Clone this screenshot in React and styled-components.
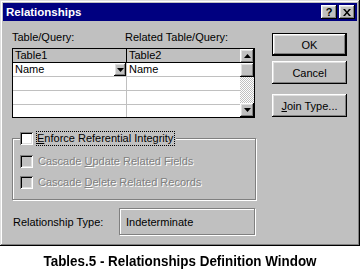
import React from "react"
import styled, { createGlobalStyle } from "styled-components"

const GlobalStyle = createGlobalStyle`
  html, body { margin:0; padding:0; background:#fff; }
  body { font-family:"Liberation Sans", Arial, sans-serif; font-size:11px; color:#000; }
  * { box-sizing:border-box; }
`

const raised = `
  background:#c0c0c0;
  box-shadow: inset -1px -1px #000, inset 1px 1px #fff, inset -2px -2px #808080, inset 2px 2px #dfdfdf;
`

const Page = styled.div`
width:360px;
`

const Window = styled.div`
width:360px;
height:246px;
padding:3px;
background:#c0c0c0;
box-shadow: inset -1px -1px #000, inset 1px 1px #dfdfdf, inset -2px -2px #808080, inset 2px 2px #fff;
display:flex;
flex-direction:column;
`

const TitleBar = styled.div`
height:18px;
background:#000080;
display:flex;
align-items:center;
padding:0 2px 0 3px;
`

const TitleText = styled.div`
flex:1;
color:#fff;
font-weight:bold;
font-size:11.5px;
`

const CaptionButton = styled.div`
${raised}
width:16px;
height:14px;
margin-left:2px;
display:flex;
align-items:center;
justify-content:center;
font-weight:bold;
font-size:11px;
line-height:14px;
`

const Body = styled.div`
flex:1;
display:flex;
padding-left:9px;
`

const LeftCol = styled.div`
width:245px;
padding-top:10px;
display:flex;
flex-direction:column;
`

const RightCol = styled.div`
width:75px;
margin-left:15px;
padding-top:12px;
display:flex;
flex-direction:column;
`

const Labels = styled.div`
display:grid;
grid-template-columns:113px 1fr;
line-height:13px;
height:13px;
margin-bottom:4px;
`

const Grid = styled.div`
width:243px;
height:70px;
border:1px solid #000;
display:flex;
background:#fff;
`

const Rows = styled.div`
width:227px;
display:flex;
flex-direction:column;
`

const Row = styled.div`
display:flex;
height:${p => (p.$last ? 12 : 14)}px;
border-bottom:${p => (p.$last ? "none" : p.$header ? "1px solid #000" : "1px solid #c0c0c0")};
background:${p => (p.$header ? "#c0c0c0" : "#fff")};
`

const Cell = styled.div`
width:${p => (p.$first ? 114 : 113)}px;
border-right:${p => (p.$first ? (p.$header ? "1px solid #000" : "1px solid #c0c0c0") : "none")};
display:flex;
line-height:13px;
`

const CellText = styled.span`
flex:1;
padding-left:2px;
`

const DropButton = styled.div`
${raised}
width:12px;
height:13px;
display:flex;
align-items:center;
justify-content:center;
`

const ScrollBar = styled.div`
width:14px;
display:flex;
flex-direction:column;
`

const ScrollBtn = styled.div`
${raised}
height:14px;
display:flex;
align-items:center;
justify-content:center;
`

const Track = styled.div`
flex:1;
background-image:conic-gradient(#c0c0c0 25%, #fff 0 50%, #c0c0c0 0 75%, #fff 0);
background-size:2px 2px;
`

const Group = styled.fieldset`
margin:13px 0 0 0;
width:244px;
padding:0 7px 10px 7px;
border:1px solid #808080;
box-shadow: inset 1px 1px #fff, 1px 1px #fff;
min-width:0;
`

const Legend = styled.legend`
padding:0 1px 0 0;
margin-left:0;
background:#c0c0c0;
display:flex;
align-items:center;
height:15px;
`

const CheckBox = styled.span`
display:inline-block;
width:13px;
height:13px;
flex:none;
background:${p => (p.$disabled ? "#c0c0c0" : "#fff")};
box-shadow: inset 1px 1px #808080, inset -1px -1px #fff, inset 2px 2px #000, inset -2px -2px #dfdfdf;
`

const FocusLabel = styled.span`
margin-left:3px;
border:1px dotted #000;
padding:0 1px 0 0;
line-height:13px;
`

const OptionRow = styled.div`
display:flex;
align-items:center;
height:13px;
margin-top:${p => p.$gap}px;
`

const DisabledLabel = styled.span`
margin-left:5px;
color:#808080;
text-shadow:1px 1px 0 #fff;
line-height:13px;
`

const TypeRow = styled.div`
display:flex;
align-items:center;
margin-top:8px;
`

const TypeLabel = styled.div`
width:107px;
padding-left:1px;
`

const TypeBox = styled.div`
width:136px;
height:27px;
border:1px solid #808080;
box-shadow: inset 1px 1px #fff, 1px 1px #fff;
padding-left:6px;
display:flex;
align-items:center;
`

const Button = styled.div`
${raised}
width:75px;
height:23px;
display:flex;
align-items:center;
justify-content:center;
margin-top:${p => p.$gap || 0}px;
${p => p.$default && `
  border:1px solid #000;
`}
`

const Caption = styled.div`
text-align:center;
padding-top:6px;
font-weight:bold;
font-size:15.5px;
line-height:17px;
transform:scaleX(0.865);
`

const Arrow = ({ up }) => (
  <svg width="7" height="4" viewBox="0 0 7 4">
    <polygon points={up ? "3.5,0 7,4 0,4" : "0,0 7,0 3.5,4"} fill="#000" />
  </svg>
)

const CloseGlyph = () => (
  <svg width="8" height="7" viewBox="0 0 8 7">
    <path d="M0 0h2l2 2.5L6 0h2L5 3.5 8 7H6L4 4.5 2 7H0l3-3.5z" fill="#000" />
  </svg>
)

const U = styled.span`
text-decoration:underline;
`

export default function App() {
  return (
    <Page>
      <GlobalStyle />
      <Window>
        <TitleBar>
          <TitleText>Relationships</TitleText>
          <CaptionButton>?</CaptionButton>
          <CaptionButton><CloseGlyph /></CaptionButton>
        </TitleBar>
        <Body>
          <LeftCol>
            <Labels>
              <span>Table/Query:</span>
              <span>Related Table/Query:</span>
            </Labels>
            <Grid>
              <Rows>
                <Row $header>
                  <Cell $first $header><CellText>Table1</CellText></Cell>
                  <Cell><CellText>Table2</CellText></Cell>
                </Row>
                <Row>
                  <Cell $first>
                    <CellText>Name</CellText>
                    <DropButton><Arrow /></DropButton>
                  </Cell>
                  <Cell><CellText>Name</CellText></Cell>
                </Row>
                <Row>
                  <Cell $first />
                  <Cell />
                </Row>
                <Row>
                  <Cell $first />
                  <Cell />
                </Row>
                <Row $last>
                  <Cell $first />
                  <Cell />
                </Row>
              </Rows>
              <ScrollBar>
                <ScrollBtn><Arrow up /></ScrollBtn>
                <ScrollBtn />
                <Track />
                <ScrollBtn><Arrow /></ScrollBtn>
              </ScrollBar>
            </Grid>
            <Group>
              <Legend>
                <CheckBox />
                <FocusLabel><U>E</U>nforce Referential Integrity</FocusLabel>
              </Legend>
              <OptionRow $gap={9}>
                <CheckBox $disabled />
                <DisabledLabel>Cascade <U>U</U>pdate Related Fields</DisabledLabel>
              </OptionRow>
              <OptionRow $gap={8}>
                <CheckBox $disabled />
                <DisabledLabel>Cascade <U>D</U>elete Related Records</DisabledLabel>
              </OptionRow>
            </Group>
            <TypeRow>
              <TypeLabel>Relationship Type:</TypeLabel>
              <TypeBox>Indeterminate</TypeBox>
            </TypeRow>
          </LeftCol>
          <RightCol>
            <Button $default>OK</Button>
            <Button $gap={5}>Cancel</Button>
            <Button $gap={10}><span><U>J</U>oin Type...</span></Button>
          </RightCol>
        </Body>
      </Window>
      <Caption>Tables.5 - Relationships Definition Window</Caption>
    </Page>
  )
}
